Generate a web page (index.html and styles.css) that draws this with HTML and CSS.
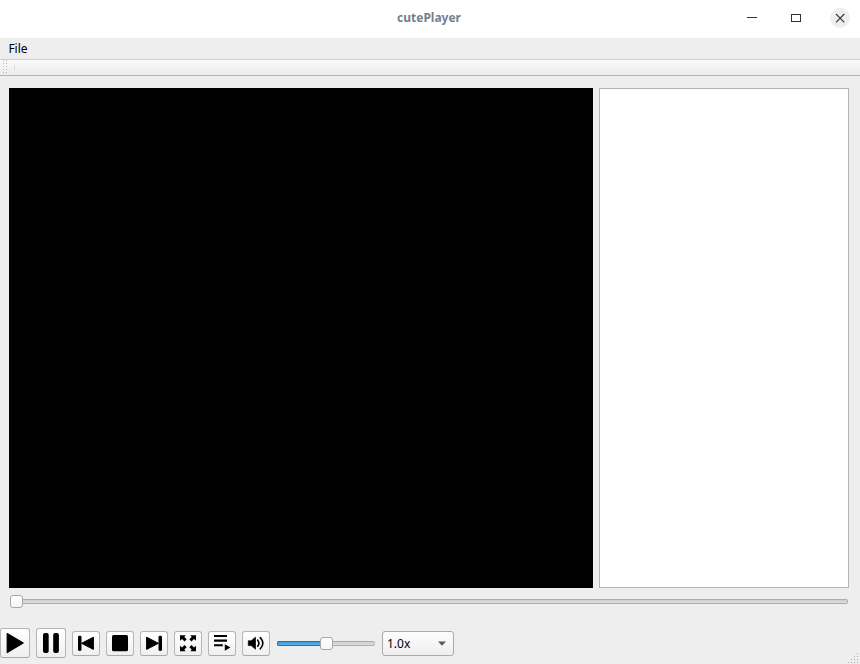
FILE: index.html
```html
<!DOCTYPE html>
<html lang="en">
<head>
<meta charset="utf-8">
<title>cutePlayer</title>
<link rel="stylesheet" href="styles.css">
</head>
<body>
<div class="window">
  <header class="titlebar">
    <span></span>
    <h1 class="title">cutePlayer</h1>
    <div class="window-controls">
      <svg width="30" height="20"><path d="M10 9.5h10" stroke="#2e2e33"/></svg>
      <svg width="30" height="20"><rect x="10.5" y="6.5" width="9" height="7" fill="none" stroke="#2e2e33"/></svg>
      <svg width="30" height="20"><circle cx="15" cy="10" r="10" fill="#eeeeef"/><path d="M11 6l8.3 8.3M19.3 6l-8.3 8.3" stroke="#3a3a3e" stroke-width="1.15"/></svg>
    </div>
  </header>
  <nav class="menubar"><span>File</span></nav>
  <div class="toolbar"><span class="grip"></span><span class="separator"></span></div>
  <main class="content">
    <div class="video"></div>
    <div class="playlist"></div>
  </main>
  <div class="seek"><span class="handle"></span><span class="groove"></span></div>
  <footer class="controls">
    <button class="btn large" aria-label="Play"><svg width="30" height="30"><path d="M7.2 5.5L23.2 15L7.2 24.5Z" stroke="#000" stroke-width="1.2" stroke-linejoin="round"/></svg></button>
    <button class="btn large" aria-label="Pause"><svg width="30" height="30"><rect x="7" y="5" width="5.7" height="20" rx="2"/><rect x="17.2" y="5" width="5.7" height="20" rx="2"/></svg></button>
    <button class="btn" aria-label="Previous"><svg width="28" height="25"><rect x="6" y="4.7" width="3.5" height="15.2" rx="1.4"/><path d="M9.6 12.3L21.4 6.2V18.4Z" stroke="#000" stroke-linejoin="round"/></svg></button>
    <button class="btn" aria-label="Stop"><svg width="28" height="25"><rect x="6" y="4" width="16" height="16.3" rx="1.5"/></svg></button>
    <button class="btn" aria-label="Next"><svg width="28" height="25"><path d="M18.4 12.3L6.6 6.2V18.4Z" stroke="#000" stroke-linejoin="round"/><rect x="18.5" y="4.7" width="3.5" height="15.2" rx="1.4"/></svg></button>
    <button class="btn" aria-label="Full screen"><svg width="28" height="25"><path id="arrow" d="M6 4.3H11.6L10.3 5.9L12.7 8.3L10.5 10.5L8 8L6 9.8Z"/><use href="#arrow" transform="translate(28 0) scale(-1 1)"/><use href="#arrow" transform="translate(0 24.5) scale(1 -1)"/><use href="#arrow" transform="translate(28 24.5) scale(-1 -1)"/></svg></button>
    <button class="btn" aria-label="Playlist"><svg width="28" height="25"><path d="M6 4h13v2H6zM6 8.6h13v2.1H6zM6 13.2h8.8v2.1H6zM16.8 13.2L22.4 16.5L16.8 19.8Z"/></svg></button>
    <button class="btn" aria-label="Volume"><svg width="28" height="25"><path d="M6.3 9.8h2.9l4.3-3.6v12l-4.3-3.6H6.3z" stroke="#000" stroke-width=".7" stroke-linejoin="round"/><path d="M15.7 9.2q2.4 3 0 6M18.3 6.6q5.2 5.6 0 11.2" fill="none" stroke="#000" stroke-width="1.6" stroke-linecap="round"/></svg></button>
    <div class="volume"><span class="groove filled"></span><span class="handle"></span><span class="groove"></span></div>
    <div class="combo"><span>1.0x</span><svg width="8" height="5"><path d="M0 .5h8L4 4.7z" fill="#5a5a5a"/></svg></div>
    <svg class="size-grip" width="12" height="12"><path d="M9 1.5h1M6 4.5h1m2 0h1M3 7.5h1m2 0h1m2 0h1M0 10.5h1m2 0h1m2 0h1m2 0h1" stroke="#aaa"/></svg>
  </footer>
</div>
</body>
</html>
```
FILE: styles.css
```css
* { box-sizing: border-box; }
body { margin: 0; font: 12px "Noto Sans", sans-serif; color: #000; }
.window { width: 860px; height: 664px; background: #eee; overflow: hidden; display: flex; flex-direction: column; }
.titlebar { height: 38px; background: #fff; display: grid; grid-template-columns: 1fr auto 1fr; align-items: center; padding-bottom: 2px; }
.title { margin: 0 2px 0 0; font-size: 12px; line-height: 18px; font-weight: 700; color: #747f8e; }
.window-controls { display: flex; justify-content: flex-end; gap: 14px; padding-right: 5px; }
svg { display: block; flex: none; }
.menubar { height: 21px; padding-left: 8.4px; line-height: 21px; }
.toolbar { height: 17px; border-top: 1px solid #d0d0d0; border-bottom: 1px solid #b4b4b4; background: linear-gradient(#fafafa, #ebebeb); display: flex; align-items: center; padding-left: 3px; gap: 7px; }
.grip { width: 4px; height: 15px; background: radial-gradient(circle at 0.5px 0.5px, #b9b9b9 0.6px, transparent 0.7px) 0 0 / 3px 3px; }
.separator { width: 1px; height: 5px; background: #d8d8d8; }
.content { height: 512px; padding: 12px 11px 0 9px; display: flex; gap: 6px; }
.video { width: 584px; background: #000; }
.playlist { width: 250px; background: #fff; border: 1px solid #b4b4b4; }
.seek { height: 27px; padding: 0 12px 0 10px; display: flex; align-items: center; }
.handle { width: 13px; height: 13px; flex: none; border: 1px solid #a8a8a8; border-radius: 3px; background: linear-gradient(#fff, #f6f6f6); }
.groove { flex: 1; height: 5px; border: 1px solid #acacac; border-left: 0; border-radius: 0 2px 2px 0; background: linear-gradient(#cfcfcf, #dedede); }
.volume .groove { border-right-color: #bbb; }
.groove.filled { flex: none; width: 43px; border: 1px solid #2b6f9f; border-right: 0; border-radius: 2px 0 0 2px; background: linear-gradient(#3d9bdb, #58b1ec); }
.controls { height: 49px; padding-top: 13px; display: flex; align-items: flex-start; gap: 6px; position: relative; }
.btn { width: 28px; height: 25px; margin: 3px 0 0; padding: 0; border: 1px solid #b5b5b5; border-bottom-color: #a8a8a8; border-radius: 3px; background: linear-gradient(#fff, #f0f0f0); }
.btn svg { margin: -1px; }
.btn.large { width: 30px; height: 30px; margin-top: 0; }
.volume { width: 98px; height: 25px; margin: 3px 1px 0; display: flex; align-items: center; }
.combo { width: 72px; height: 25px; margin-top: 3px; padding: 0 7px 0 4px; border: 1px solid #aaa; border-radius: 3px; background: linear-gradient(#fdfdfd, #efefef); display: flex; align-items: center; justify-content: space-between; }
.size-grip { position: absolute; right: 0; bottom: 0; }
```
